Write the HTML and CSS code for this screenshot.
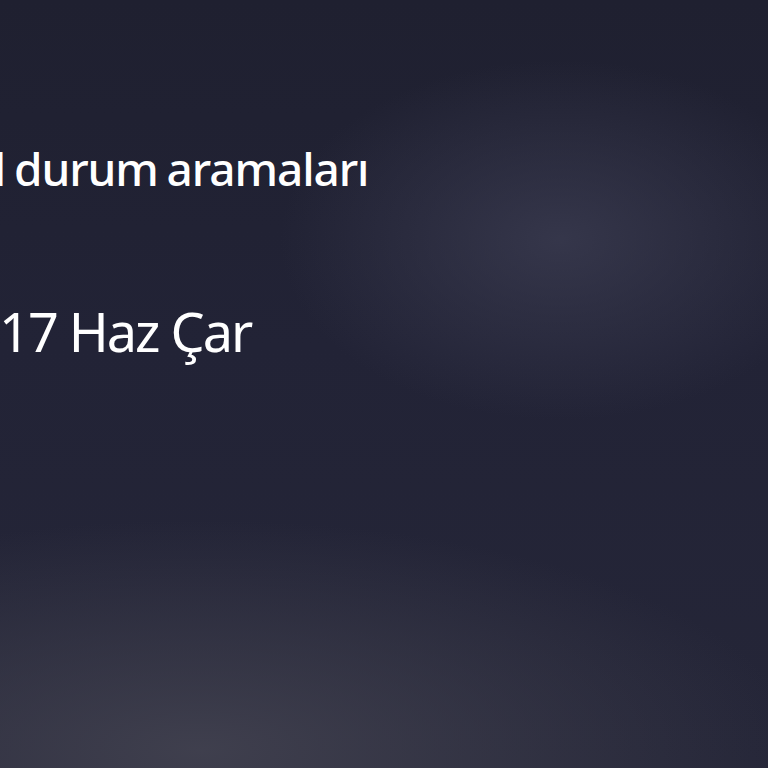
FILE: index.html
```html
<!DOCTYPE html>
<html lang="tr">
<head>
<meta charset="utf-8">
<link rel="stylesheet" href="styles.css">
</head>
<body>
<main class="screen">
  <div class="content">
    <p class="emergency">Acil durum aramaları</p>
    <p class="date">17 Haz Çar</p>
  </div>
</main>
</body>
</html>
```
FILE: styles.css
```css
html, body {
  margin: 0;
  padding: 0;
  width: 768px;
  height: 768px;
  overflow: hidden;
}
.screen {
  width: 768px;
  height: 768px;
  background:
    radial-gradient(ellipse 280px 180px at 560px 240px, rgba(60,61,82,0.75), rgba(60,61,82,0) 100%),
    radial-gradient(ellipse 600px 230px at 200px 750px, rgba(66,66,80,0.9), rgba(66,66,80,0) 100%),
    linear-gradient(180deg, #1f2030 0%, #222336 45%, #252638 100%);
  font-family: "Noto Sans", "Open Sans", sans-serif;
  color: #ffffff;
  display: flex;
  flex-direction: column;
}
.content {
  margin-left: -68px;
  padding-top: 138px;
  display: flex;
  flex-direction: column;
}
.emergency {
  margin: 0;
  font-size: 46px;
  font-weight: 500;
  letter-spacing: -1.1px;
  word-spacing: -2px;
  line-height: 60px;
}
.date {
  margin: 103px 0 0 67px;
  font-size: 54px;
  letter-spacing: -2px;
  line-height: 60px;
}
```
